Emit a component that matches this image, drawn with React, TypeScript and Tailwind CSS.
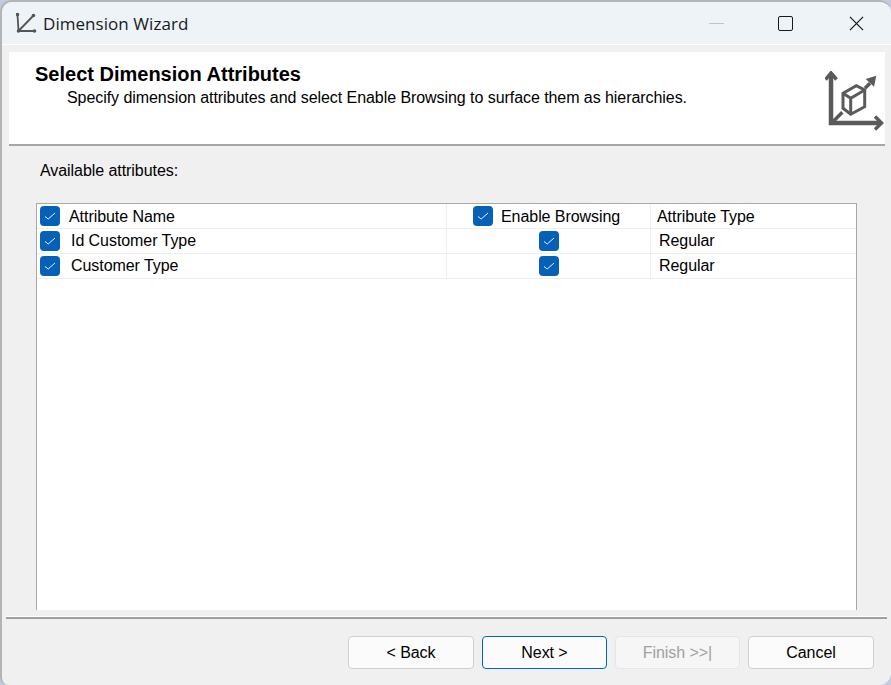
import React from 'react';

const rows = [
  { name: 'Id Customer Type', type: 'Regular' },
  { name: 'Customer Type', type: 'Regular' },
];

const Check = () => (
  <span className="flex h-5 w-5 shrink-0 items-center justify-center rounded-[4px] bg-[#0560b8]">
    <svg width="12" height="10" viewBox="0 0 12 10" fill="none" stroke="#eef4fb" strokeWidth="1">
      <path d="M1 5.5 L4.2 8 L11 2" />
    </svg>
  </span>
);

const Button = ({ label, variant, wide }: { label: string; variant?: 'primary' | 'disabled'; wide?: boolean }) => {
  let cls = 'border-[#d0d0d0] bg-[#fbfbfb] text-black';
  if (variant === 'primary') cls = 'border-[#0067c0] bg-[#fbfbfb] text-black';
  if (variant === 'disabled') cls = 'border-[#e6e6e6] bg-[#f6f6f6] text-[#a0a0a0]';
  return (
    <div className={`flex h-[33px] items-center justify-center rounded-[4px] border text-base ${wide ? 'w-[126px]' : 'w-[125px]'} ${cls}`}>
      {label}
    </div>
  );
};

export default function App() {
  return (
    <div className="h-[685px] w-[891px] overflow-hidden bg-[#c3c9de] font-['Liberation_Sans',sans-serif] tracking-[-0.06px] text-black">
      <div className="h-[685px] w-[891px] overflow-hidden rounded-t-[12px] rounded-br-[12px] rounded-bl-[8px] border-t-[2px] border-l-[2px] border-[#b4b4b4] bg-[#f0f0f0]">
        {/* title bar */}
        <div className="flex h-[43px] items-center border-b border-white bg-[#eef3f8] pr-[27px] pl-[14px]">
          <svg width="22" height="22" viewBox="0 0 22 22" fill="none" stroke="#555555" strokeWidth="1.8">
            <path d="M1.5 2.5 L2.5 19 H18.5 M2.5 19 L17.5 3.5" />
            <circle cx="1.5" cy="2.5" r="1.8" fill="#555555" stroke="none" />
            <circle cx="18.5" cy="19" r="1.8" fill="#555555" stroke="none" />
            <circle cx="17.5" cy="3.5" r="1.8" fill="#555555" stroke="none" />
            <circle cx="2.5" cy="19" r="1.8" fill="#555555" stroke="none" />
          </svg>
          <span className="mt-px ml-[5px] font-['Open_Sans',sans-serif] text-[17px] tracking-[0.05px] text-[#1a1a1a]">Dimension Wizard</span>
          <div className="ml-auto flex items-center">
            <span className="h-px w-[15px] bg-[#c4c4c4]" />
            <span className="ml-[54px] h-[15px] w-[15px] rounded-[2px] border-[1.5px] border-[#1a1a1a]" />
            <svg className="ml-[56px]" width="15" height="15" viewBox="0 0 16 16" stroke="#1a1a1a" strokeWidth="1.3">
              <path d="M1 1 L15 15 M15 1 L1 15" />
            </svg>
          </div>
        </div>

        {/* header band */}
        <div className="mt-[7px] ml-[7px] flex h-[94px] w-[876px] border-b-[2px] border-[#a6a6a6] bg-white pt-[11px] pl-[26px]">
          <div>
            <div className="text-xl leading-[22px] font-bold tracking-normal">Select Dimension Attributes</div>
            <div className="mt-[2px] ml-[32px] text-base leading-[22px]">
              Specify dimension attributes and select Enable Browsing to surface them as hierarchies.
            </div>
          </div>
          <svg className="mt-[8px] ml-auto" width="60" height="60" viewBox="0 0 60 60" fill="none" stroke="#5a5a5a" strokeWidth="3.5">
            <path d="M6 2 V52 H56" strokeWidth="4.5" />
            <path d="M0.5 8.5 L6 2 L11.5 8.5" />
            <path d="M50 45.5 L56.5 52 L50 58.5" />
            <path d="M8 50.7 L17.3 41.3" />
            <path d="M40 17.3 L45 12.3" />
            <polygon points="40.7,8 51.3,4.7 49,15.7" fill="#5a5a5a" stroke="none" />
            <path d="M18 22.3 L31.3 14.7 L39.7 19 V35.7 L25.7 43.3 L18 37.3 Z" strokeWidth="3" />
            <path d="M18 22.3 L25.7 27.3 L39.7 19 M25.7 27.3 V43.3" strokeWidth="3" />
          </svg>
        </div>

        {/* body */}
        <div className="pl-[34px]">
          <div className="pt-[15px] pl-[4px] text-base leading-[20px]">Available attributes:</div>
          <div className="mt-[22px] h-[407px] w-[821px] border-t border-r border-l border-[#a8a8a8] bg-white">
            <div className="flex h-[25px] items-center border-b border-[#eeeeee] text-base">
              <div className="flex h-full w-[410px] items-center border-r border-[#eeeeee] pl-[3px]">
                <Check />
                <span className="ml-[9px] pt-px">Attribute Name</span>
              </div>
              <div className="flex h-full w-[204px] items-center border-r border-[#eeeeee] pl-[26px]">
                <Check />
                <span className="ml-[8px] pt-px">Enable Browsing</span>
              </div>
              <div className="pt-px pl-[6px]">Attribute Type</div>
            </div>
            {rows.map((row) => (
              <div key={row.name} className="flex h-[25px] items-center border-b border-[#eeeeee] text-base">
                <div className="flex h-full w-[410px] items-center border-r border-[#eeeeee] pl-[3px]">
                  <Check />
                  <span className="ml-[11px]">{row.name}</span>
                </div>
                <div className="flex h-full w-[204px] items-center justify-center border-r border-[#eeeeee]">
                  <Check />
                </div>
                <div className="pl-[8px]">{row.type}</div>
              </div>
            ))}
          </div>
        </div>

        {/* footer */}
        <div className="mt-[6px] ml-[4px] h-[3px] w-[881px] border-t border-b-[2px] border-t-white border-b-[#a0a0a0]" />
        <div className="mt-[17px] ml-[346px] flex gap-[8px]">
          <Button label="< Back" wide />
          <Button label="Next >" variant="primary" />
          <Button label="Finish >>|" variant="disabled" />
          <Button label="Cancel" wide />
        </div>
      </div>
    </div>
  );
}
